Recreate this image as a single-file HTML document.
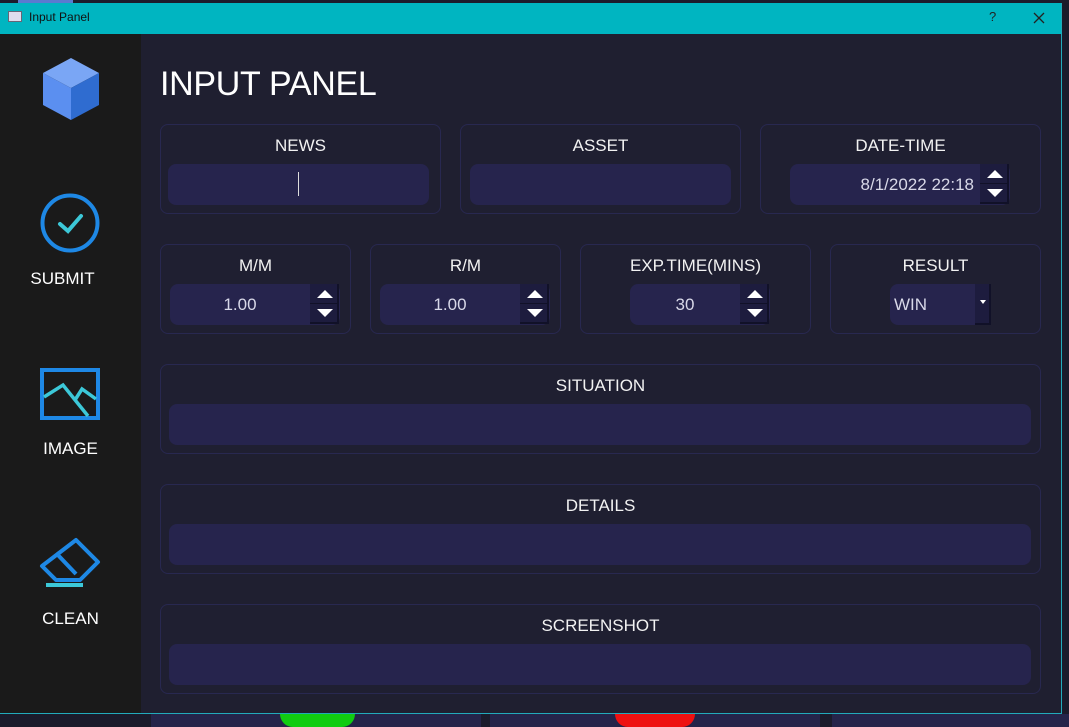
<!DOCTYPE html>
<html><head><style>
*{margin:0;padding:0;box-sizing:border-box}
body{width:1069px;height:727px;overflow:hidden;background:#1b1b2b;font-family:"Liberation Sans",sans-serif;position:relative}
.a{position:absolute}
.box{position:absolute;border:1px solid #282850;border-radius:8px;background:#1f1f31}
.lbl{position:absolute;left:0;right:0;text-align:center;color:#f2f2f2;font-size:17px;top:11px}
.inp{position:absolute;background:#26244d;border-radius:8px}
.val{position:absolute;color:#d8d8e8;font-size:17px;text-align:center}
.spin{position:absolute;width:29px;height:40px;background:#1d1c3e;border-right:2px solid #111128;border-bottom:2px solid #111128}
.spin:before{content:"";position:absolute;left:7px;top:6px;border-left:8px solid transparent;border-right:8px solid transparent;border-bottom:8px solid #fff}
.spin:after{content:"";position:absolute;left:7px;top:25px;border-left:8px solid transparent;border-right:8px solid transparent;border-top:8px solid #fff}
.spin i{position:absolute;left:0;right:0;top:19px;height:1px;background:#111128}
.side{color:#fff;font-size:17px;position:absolute;text-align:center;width:141px}
</style></head><body>
<div class="a" style="left:0;top:0;width:1069px;height:3px;background:#1c1c2c"></div>
<div class="a" style="left:18px;top:0;width:55px;height:3px;background:#5a7bd0"></div>
<div class="a" style="left:0;top:3px;width:1062px;height:31px;background:#00b5c1"></div>
<div class="a" style="left:8px;top:11px;width:14px;height:11px;background:#dde;border:1px solid #667"></div>
<div class="a" style="left:29px;top:10px;font-size:12px;color:#111">Input Panel</div>
<div class="a" style="left:989px;top:9px;font-size:13px;color:#222">?</div>
<svg class="a" style="left:1033px;top:12px" width="12" height="12"><path d="M1 1L11 11M11 1L1 11" stroke="#222" stroke-width="1.3"/></svg>
<div class="a" style="left:0;top:34px;width:141px;height:680px;background:#1a1a1a"></div>
<div class="a" style="left:141px;top:34px;width:921px;height:680px;background:#1f1f30"></div>
<div class="a" style="left:1061px;top:3px;width:1px;height:712px;background:#2ab"></div>
<div class="a" style="left:0;top:713px;width:1062px;height:1px;background:#2ab"></div>
<div class="a" style="left:151px;top:714px;width:330px;height:13px;background:#25244a"></div>
<div class="a" style="left:490px;top:714px;width:330px;height:13px;background:#25244a"></div>
<div class="a" style="left:832px;top:714px;width:237px;height:13px;background:#25244a"></div>
<div class="a" style="left:280px;top:714px;width:75px;height:13px;background:#1c1;border-radius:0 0 40px 40px"></div>
<div class="a" style="left:615px;top:714px;width:80px;height:13px;background:#e11;border-radius:0 0 40px 40px"></div>
<svg class="a" style="left:40px;top:56px" width="62" height="66" viewBox="0 0 62 66"><polygon points="31,2 59,17 31,32 3,17" fill="#7aa6f5"/><polygon points="3,17 31,32 31,64 3,49" fill="#5b8ff0"/><polygon points="59,17 31,32 31,64 59,49" fill="#2f6cd0"/></svg>
<svg class="a" style="left:40px;top:193px" width="62" height="62"><circle cx="30" cy="30" r="27.5" fill="none" stroke="#1e88e5" stroke-width="4"/><path d="M20 31 L28 38 L41 23" fill="none" stroke="#3cc8d8" stroke-width="4" stroke-linecap="round"/></svg>
<div class="side" style="left:-8px;top:269px">SUBMIT</div>
<svg class="a" style="left:40px;top:368px" width="62" height="54"><rect x="2" y="2" width="56" height="48" fill="none" stroke="#1e88e5" stroke-width="4"/><path d="M4 29 L23 17 L48 48 M35 32 L42 21 L56 31" fill="none" stroke="#3cc8d8" stroke-width="3.5"/></svg>
<div class="side" style="left:0;top:439px">IMAGE</div>
<svg class="a" style="left:38px;top:537px" width="64" height="54"><path d="M38 3 L60 25 L42 43 L18 43 L4 29 Z" fill="none" stroke="#1e88e5" stroke-width="4" stroke-linejoin="round"/><path d="M18 16 L38 37" stroke="#1e88e5" stroke-width="4"/><path d="M8 48 L45 48" stroke="#3cc8d8" stroke-width="4"/></svg>
<div class="side" style="left:0;top:609px">CLEAN</div>
<div class="a" style="left:160px;top:65px;color:#fff;font-size:34px;letter-spacing:-0.3px">INPUT PANEL</div>

<div class="box" style="left:160px;top:124px;width:281px;height:90px"><div class="lbl">NEWS</div></div>
<div class="inp" style="left:168px;top:164px;width:261px;height:41px"></div>
<div class="a" style="left:298px;top:172px;width:1px;height:24px;background:#ddd"></div>
<div class="box" style="left:460px;top:124px;width:281px;height:90px"><div class="lbl">ASSET</div></div>
<div class="inp" style="left:470px;top:164px;width:261px;height:41px"></div>
<div class="box" style="left:760px;top:124px;width:281px;height:90px"><div class="lbl">DATE-TIME</div></div>
<div class="inp" style="left:790px;top:164px;width:220px;height:41px"></div>
<div class="val" style="left:790px;top:175px;width:184px;text-align:right">8/1/2022 22:18</div>
<div class="spin" style="left:980px;top:164px"><i></i></div>

<div class="box" style="left:160px;top:244px;width:191px;height:90px"><div class="lbl">M/M</div></div>
<div class="inp" style="left:170px;top:284px;width:170px;height:41px"></div>
<div class="val" style="left:170px;top:295px;width:140px">1.00</div>
<div class="spin" style="left:310px;top:284px"><i></i></div>
<div class="box" style="left:370px;top:244px;width:191px;height:90px"><div class="lbl">R/M</div></div>
<div class="inp" style="left:380px;top:284px;width:170px;height:41px"></div>
<div class="val" style="left:380px;top:295px;width:140px">1.00</div>
<div class="spin" style="left:520px;top:284px"><i></i></div>
<div class="box" style="left:580px;top:244px;width:231px;height:90px"><div class="lbl">EXP.TIME(MINS)</div></div>
<div class="inp" style="left:630px;top:284px;width:140px;height:41px"></div>
<div class="val" style="left:630px;top:295px;width:110px">30</div>
<div class="spin" style="left:740px;top:284px"><i></i></div>
<div class="box" style="left:830px;top:244px;width:211px;height:90px"><div class="lbl">RESULT</div></div>
<div class="inp" style="left:890px;top:284px;width:100px;height:41px"></div>
<div class="val" style="left:894px;top:295px;text-align:left">WIN</div>
<div class="a" style="left:975px;top:284px;width:16px;height:41px;background:#1d1c3e;border-right:2px solid #111128;border-bottom:2px solid #111128"></div>
<div class="a" style="left:980px;top:300px;border-left:3px solid transparent;border-right:3px solid transparent;border-top:4px solid #fff"></div>

<div class="box" style="left:160px;top:364px;width:881px;height:90px"><div class="lbl">SITUATION</div></div>
<div class="inp" style="left:169px;top:404px;width:862px;height:41px"></div>
<div class="box" style="left:160px;top:484px;width:881px;height:90px"><div class="lbl">DETAILS</div></div>
<div class="inp" style="left:169px;top:524px;width:862px;height:41px"></div>
<div class="box" style="left:160px;top:604px;width:881px;height:90px"><div class="lbl">SCREENSHOT</div></div>
<div class="inp" style="left:169px;top:644px;width:862px;height:41px"></div>
</body></html>
